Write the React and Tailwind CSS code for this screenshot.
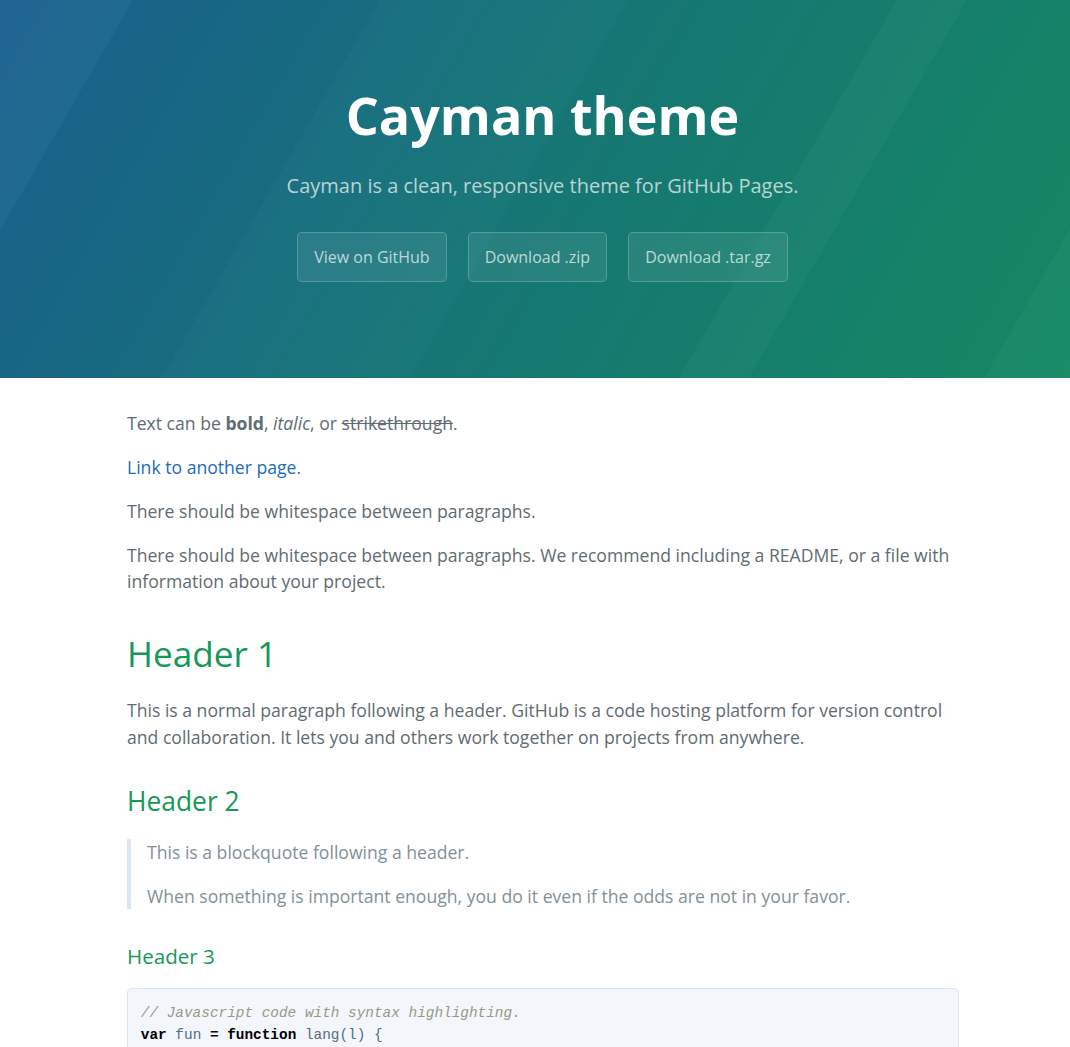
import React from 'react';

const bands = [
  { pts: '0,0 133,0 -85,378 0,378', fill: 'white', op: 0.03 },
  { pts: '133,0 380,0 162,378 -85,378', fill: 'black', op: 0.02 },
  { pts: '380,0 628,0 410,378 162,378', fill: 'white', op: 0.012 },
  { pts: '628,0 897,0 679,378 410,378', fill: 'black', op: 0.01 },
  { pts: '897,0 967,0 749,378 679,378', fill: 'white', op: 0.02 },
  { pts: '967,0 1202,0 984,378 749,378', fill: 'black', op: 0.01 },
  { pts: '1202,0 1300,0 1300,378 984,378', fill: 'white', op: 0.02 },
];

const HeaderBands = () => (
  <svg
    className="absolute inset-0 w-full h-full"
    viewBox="0 0 1070 378"
    preserveAspectRatio="none"
  >
    {bands.map((b, i) => (
      <polygon key={i} points={b.pts} fill={b.fill} fillOpacity={b.op} />
    ))}
  </svg>
);

const buttons = ['View on GitHub', 'Download .zip', 'Download .tar.gz'];

const App = () => {
  return (
    <div className="bg-white font-['Open_Sans',sans-serif] text-[#606c71]">
      <header className="relative overflow-hidden h-[378px] bg-[linear-gradient(120deg,#1a6191,#177876_50%,#168a64)]">
        <HeaderBands />
        <div className="relative flex flex-col items-center pl-[15px] pt-[76px]">
          <h1 className="text-[52px] leading-[78px] font-bold text-white">Cayman theme</h1>
          <h2 className="mt-[17px] text-[20px] leading-[30px] text-white/70">
            Cayman is a clean, responsive theme for GitHub Pages.
          </h2>
          <div className="mt-[31px] flex gap-[21px]">
            {buttons.map((b) => (
              <a
                key={b}
                href="#"
                className="block px-4 py-3 text-[16px] leading-[24px] text-white/70 bg-white/[0.08] border border-white/20 rounded-[4.8px]"
              >
                {b}
              </a>
            ))}
          </div>
        </div>
      </header>

      <main className="ml-[127px] w-[832px] pt-8 text-[17.6px] leading-[1.5]">
        <p>
          Text can be <strong className="font-bold">bold</strong>, <em>italic</em>, or{' '}
          <del>strikethrough</del>.
        </p>
        <p className="mt-[17.6px]">
          <a href="#" className="text-[#1e6bb8]">Link to another page</a>.
        </p>
        <p className="mt-[17.6px]">There should be whitespace between paragraphs.</p>
        <p className="mt-[17.6px]">
          There should be whitespace between paragraphs. We recommend including a README, or a file
          with information about your project.
        </p>

        <h1 className="mt-8 text-[35.2px] leading-[1.5] text-[#159957]">Header 1</h1>
        <p className="mt-[17.6px]">
          This is a normal paragraph following a header. GitHub is a code hosting platform for version
          control and collaboration. It lets you and others work together on projects from anywhere.
        </p>

        <h2 className="mt-8 text-[26.4px] leading-[1.5] text-[#159957]">Header 2</h2>
        <blockquote className="mt-[17.6px] px-4 border-l-[4.8px] border-[#dce6f0] text-[#819198]">
          <p>This is a blockquote following a header.</p>
          <p className="mt-[17.6px]">
            When something is important enough, you do it even if the odds are not in your favor.
          </p>
        </blockquote>

        <h3 className="mt-8 text-[20.6px] leading-[1.5] text-[#159957]">Header 3</h3>
        <pre className="mt-4 mb-4 p-[12.8px] bg-[#f3f6fa] border border-[#dce6f0] rounded-[4.8px] font-['DejaVu_Sans_Mono',monospace] text-[14.4px] leading-[21px] text-[#4f7084]">
          <code>
            <span className="italic text-[#999988]">// Javascript code with syntax highlighting.</span>
            {'\n'}
            <span className="font-bold text-black">var</span> fun{' '}
            <span className="font-bold text-black">=</span>{' '}
            <span className="font-bold text-black">function</span> lang(l) {'{'}
          </code>
        </pre>
      </main>
    </div>
  );
};

export default App;
